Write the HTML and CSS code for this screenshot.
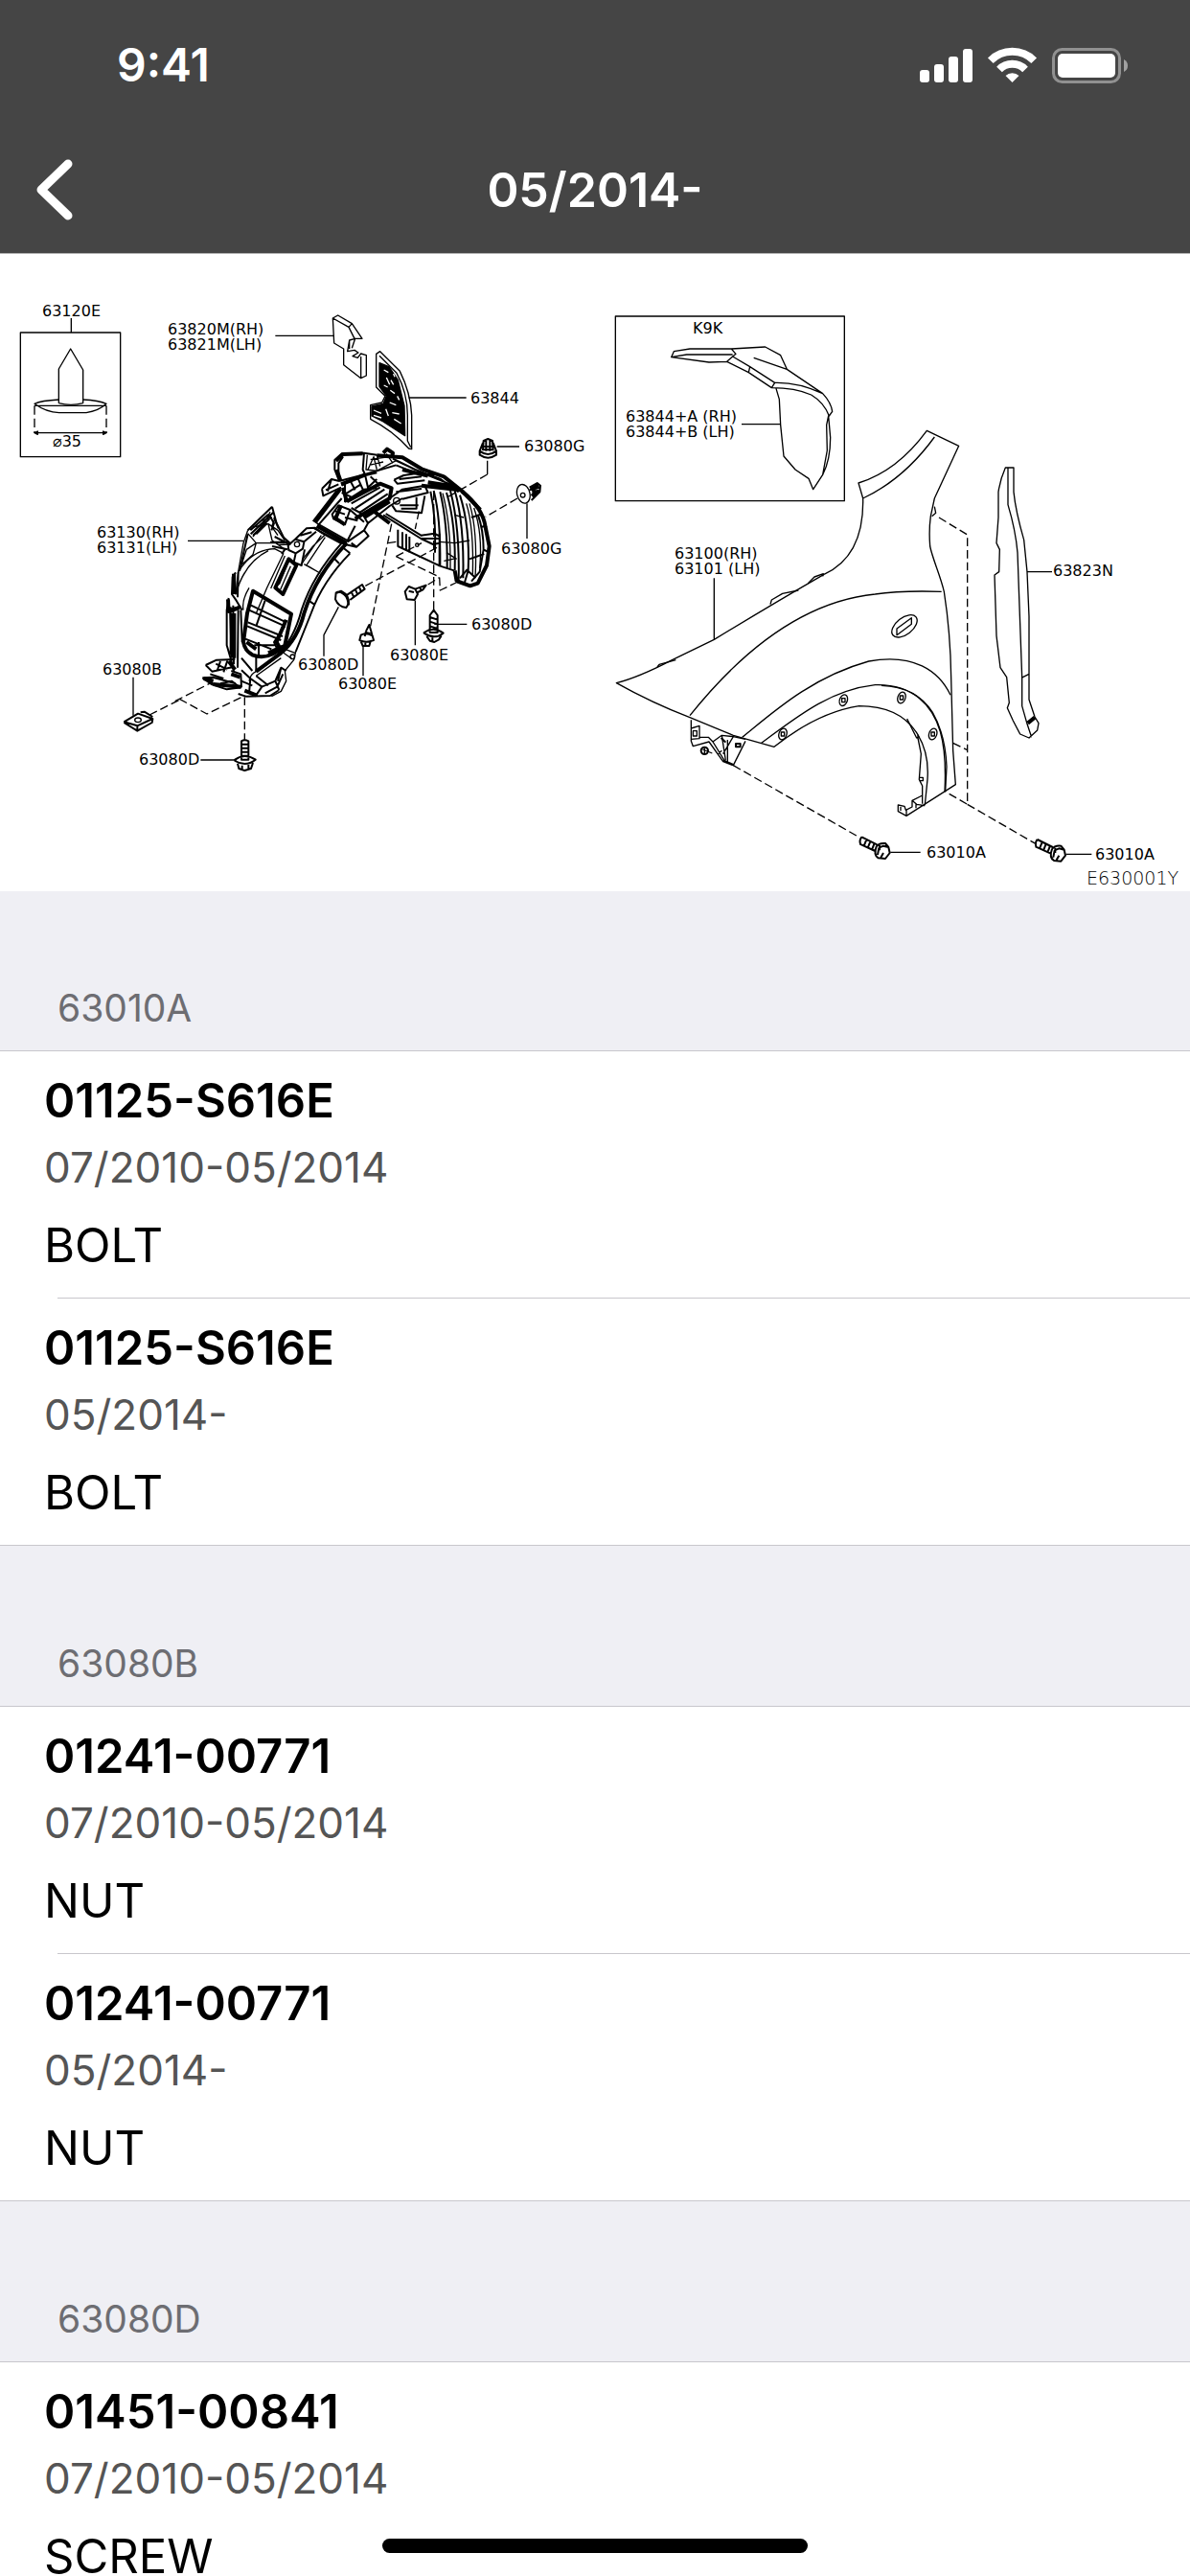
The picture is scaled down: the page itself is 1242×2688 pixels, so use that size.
FILE: index.html
```html
<!DOCTYPE html>
<html lang="en">
<head>
<meta charset="utf-8">
<meta name="viewport" content="width=device-width, initial-scale=1">
<title>05/2014-</title>
<link rel="stylesheet" href="styles.css">
</head>
<body>
<div class="screen">
  <header class="top">
    <div class="status">
      <span class="clock">9:41</span>
      <svg class="indicators" viewBox="960 48 218 39" aria-hidden="true">
        <g fill="#fff">
          <rect x="960" y="72" width="10" height="13" rx="3"/>
          <rect x="975" y="66" width="10" height="19" rx="3"/>
          <rect x="990" y="58" width="10" height="27" rx="3"/>
          <rect x="1005" y="50" width="10" height="35" rx="3"/>
          <path d="M1056.500 85 L1049.500 78 A10 10 0 0 1 1063.500 78 Z"/>
          <rect x="1104" y="55" width="60" height="25" rx="5"/>
        </g>
        <g fill="none" stroke="#fff" stroke-width="8">
          <path d="M1033.800 62.300 A32 32 0 0 1 1079.200 62.300"/>
          <path d="M1043 71.500 A19 19 0 0 1 1070 71.500"/>
        </g>
        <rect x="1099.500" y="50.500" width="69" height="34" rx="9" fill="none" stroke="#919191" stroke-width="3"/>
        <path d="M1173 61 Q1177 63 1177 67.500 Q1177 72 1173 74 Z" fill="#a2a2a2"/>
      </svg>
    </div>
    <nav class="bar">
      <button class="back" type="button" aria-label="Back">
        <svg viewBox="0 0 44 68" aria-hidden="true"><path d="M37 7 L9 34 L37 61" fill="none" stroke="#fff" stroke-width="9" stroke-linecap="round" stroke-linejoin="round"/></svg>
      </button>
      <h1 class="title">05/2014-</h1>
    </nav>
  </header>

  <main class="content">
    <svg class="diagram" viewBox="0 265 1242 665" role="img" aria-label="Front fender and fender liner parts diagram">
      <!-- clip and seals on the left -->
      <g class="ink" transform="translate(0 270) scale(.33333)">
        <path d="M64 231 H377 V620 H64 Z M223 186 V231"/>
        <path d="M184 452 V345 L221 282 L260 348 V452 M184 452 Q222 462 260 452"/>
        <path d="M184 441 Q130 444 108 454 Q145 481 185 482 H270 Q310 476 333 454 Q310 443 260 441 M108 460 H333"/>
        <path d="M108 460 V546 M333 460 V546" stroke-dasharray="28 12"/>
        <path d="M108 545 H333 M108 545 l10 -5 v10 Z M333 545 l-10 -5 v10 Z"/>
        <path d="M862 241 H1045"/>
      </g>
      <g class="ink" transform="translate(160 300) scale(.33333)">
        <path d="M562 96 L566 174 L596 192 V242 L650 284 L667 276 V212 L650 207 L640 220 L624 215 L642 204 L630 196 L608 200 L614 165 L632 160 L654 160 L622 113 L578 87 Z M562 96 L612 124 L630 160 M612 124 L622 113 M650 284 V216 M614 165 V192 M632 160 L622 190"/>
        <path d="M698 312 V208 L710 200 L772 262 Q806 330 809 400 V506 L800 504 Q750 448 680 412 V368 L716 360 L726 340 Z M708 214 L762 268 Q796 330 796 400 V480 L806 500"/>
        <path class="fill" d="M708 236 L738 248 L766 290 L786 370 L788 464 L720 420 L684 402 V372 L720 364 L730 340 L708 310 Z"/>
        <path class="light" d="M722 258 l14 8 M730 282 l10 22 M744 290 l8 14 M722 306 l12 6 M742 322 l14 10 M740 360 l20 8 M728 380 l8 22 M690 384 l24 10 M690 400 l24 8 M748 392 l22 4 M754 412 l22 14 M764 340 l6 12 M752 270 l4 10"/>
        <path d="M800 345 H980"/>
      </g>

      <!-- fender liner -->
      <g class="ink" transform="translate(180 440) scale(.33333)">
        <path d="M48 373 H222"/>
        <path class="bold" d="M312 266 L236 340 M318 282 L245 352 M312 266 L326 318 L348 362 L368 380"/>
        <path d="M236 340 L222 380 L206 470 M306 282 L290 312 L252 360 M252 330 L300 320 L330 340 L352 372 M236 350 L262 380 L232 400 M262 380 H352 M300 320 L312 372 L352 400 M232 400 L216 448 L252 416 L262 380 M312 330 L330 356 M280 310 L312 300 M322 300 L310 330 M330 386 L370 384"/>
        <path class="bold" d="M244 340 L300 290 M252 356 L304 304 M262 352 L296 318 M302 290 L318 318 L310 340 M318 300 L332 334 M236 352 L226 396 L210 468"/>
        <path class="bold" d="M306 378 L362 376 M312 390 L360 400 M320 360 L366 384 M352 400 L342 414"/>
        <path d="M206 470 Q250 400 320 398 L348 412 M206 470 L198 540 Q226 440 300 404 M222 590 Q216 560 240 520 M348 412 L296 520 L262 600 M352 420 L308 522"/>
        <path class="bold" d="M198 472 L188 486 L186 540 L200 560 L218 590 M206 470 L204 550"/>
        <path class="bold" d="M176 552 L170 590 V700 L184 748 L192 780 M182 580 V730 M190 575 L192 760 M206 590 L204 770 M172 590 L214 578 M196 600 V740 M214 590 L218 690"/>
        <path class="heavy" d="M192 476 L194 540 M174 556 L176 594 L210 582 M184 600 L188 740"/>
        <path class="heavy" d="M252 530 L372 602 L352 700 Q300 750 250 730 Q226 716 222 690 L234 600 Z"/>
        <path class="bold" d="M240 590 L352 640 M234 640 L340 684 M228 680 L310 712 M246 575 L356 628 M236 628 L345 672 M352 640 L318 690 L330 716 M262 640 L290 560 M256 700 H320 M270 690 V740"/>
        <path class="heavy" d="M356 620 L326 690 L338 712 M300 724 L346 704 M232 690 L262 712"/>
        <path class="heavy" d="M364 430 L322 520 L346 540 L388 450 Z"/>
        <path d="M370 452 L338 526 M380 460 L350 530 M358 450 L334 510"/>
        <path class="bold" d="M362 388 L384 368 L412 376 L408 398 L386 412 L364 402 Z M384 368 L420 334 L446 332 L470 350 M412 376 L450 344 M400 356 L436 346 M386 412 L380 440 L404 450 L414 400"/>
        <circle cx="390" cy="384" r="8"/>
        <path d="M404 446 L466 356 M418 452 L478 362 M412 446 L462 474 L424 452 M408 430 L440 390 L480 352"/>
        <path class="heavy" d="M546 380 Q450 480 412 600 Q392 680 340 724 L262 782"/>
        <path class="bold" d="M556 412 Q470 500 434 600 L386 720 M530 380 Q440 480 404 590 Q380 680 330 730 M536 396 L556 412 M506 428 L522 444 M426 560 L444 572"/>
        <path d="M386 720 L380 746 L352 780 L356 812 L340 844 L310 860 M352 712 L384 724 M348 724 L376 744 M262 782 Q244 790 240 812 M340 740 L262 796"/>
        <circle cx="376" cy="736" r="7"/>
        <path class="bold" d="M104 762 L138 746 L196 744 M104 762 L124 782 L190 768 M94 802 L122 822 L170 838 L216 832 M94 802 L126 800 L198 820 M118 790 L160 804 M136 758 L172 776 M150 750 L140 780 M172 748 L160 784 M184 780 L214 790 L216 832 M150 820 L186 812 L206 828 M106 810 L140 826"/>
        <path class="heavy" d="M176 750 L196 776 M128 822 L214 830 M226 842 L262 856 M98 804 L128 812 M184 790 L212 800"/>
        <path class="bold" d="M216 778 L244 804 L240 850 M206 852 L230 860 L306 858 L334 840 M244 804 L280 830 L322 812 L340 770 L356 780 M262 796 L300 826 M322 812 L334 840 M262 730 V784 M216 740 L250 780 M280 830 L262 856 M340 770 L330 812 M346 790 L328 830 L290 850 M216 812 L250 826"/>

        <path class="bold" d="M540 384 L576 392 L614 358 L600 340 M452 318 L548 372 M444 334 L540 384 M548 372 L572 326 M576 392 L560 380 M470 350 L530 382 M548 376 L600 340 L612 318"/>
        <path class="heavy" d="M526 210 L446 316 M452 326 L546 380"/>
        <path class="bold" d="M514 216 L440 312 M530 240 L458 322"/>
        <path class="bold" d="M468 210 L498 180 L522 186 M468 210 L472 232 L528 206 M480 214 L520 196 M498 180 L486 218"/>
        <path class="bold" d="M522 186 L508 150 V120 L530 100 L600 98 L640 104 M520 178 V130 L534 110 M600 98 L596 150 L604 168 M522 186 L600 166 L700 136"/>
        <path class="heavy" d="M512 122 L534 102 L596 100 M514 150 L526 184 M528 196 L604 166"/>
        <path d="M610 104 L606 150 L640 154 L700 122 M620 118 L680 110 M616 136 L660 126 M640 104 L650 140 M670 100 L690 130 M612 150 L630 110 L640 150"/>
        <path class="heavy" d="M660 98 L672 86 L690 98 L688 112 M640 106 L720 112 L780 148 L850 172 L910 220 L964 276"/>
        <path class="bold" d="M690 116 L760 150 L840 180 L896 220 M700 136 L760 160 L820 166 M700 122 L790 164 L870 196 M694 182 L724 168 L780 160 L830 176 M694 182 L704 194 L790 184 M710 180 L780 172"/>
        <path class="bold" d="M530 200 L570 176 L640 160 M540 190 V250 L600 212 L640 208 M556 184 L572 214 M580 176 L596 212 M604 170 L612 206 L640 180 M536 230 L590 196 M620 172 L650 200 M530 222 L560 236"/>
        <path class="heavy" d="M546 250 L650 194 L686 208 L680 240 L572 304"/>
        <path class="heavy" d="M504 298 L540 322 M528 262 L512 300 M600 300 L680 250 M534 206 L546 252"/>
        <path class="bold" d="M560 256 L650 206 M572 272 L664 212 M584 286 L674 226 M500 290 L520 262 L556 276 L540 322 L504 304 Z M510 280 L540 290 M556 276 L600 314 M596 290 L612 318 L680 264 L720 240 M540 300 L580 310 M560 270 L600 292 M630 276 L650 296"/>
        <circle cx="702" cy="248" r="10"/>
        <path class="bold" d="M680 240 L720 212 L790 200 L800 222 L720 242 M700 220 L780 210 M688 262 L700 280 L780 286 L790 232 M712 262 H770 M716 272 H764 V236"/>
        <path class="heavy" d="M630 280 L680 318 M780 200 L900 214 M800 190 L890 204 M720 150 L800 170"/>
        <path class="bold" d="M660 292 L778 366 L836 366 M668 288 L782 358 M778 366 L816 384 L836 380 M706 338 V390 L838 452 L882 466 M720 346 V398 M732 352 V404 M742 360 V410 M836 350 V454 M778 356 L820 350 L838 360"/>
        <circle cx="766" cy="386" r="5"/>
        <path class="bold" d="M808 218 Q826 300 822 410 M818 216 Q840 300 838 450 M838 220 Q862 320 860 458 M858 222 Q888 320 884 466 M870 216 Q900 330 896 500 M884 216 Q914 320 910 490 M900 230 Q932 330 926 466"/>
        <path d="M846 224 Q872 320 870 460 M920 256 Q944 330 940 480 M930 256 Q956 340 948 490 M944 270 Q972 350 962 460 M836 376 L884 380 L930 372 M850 436 L888 428 M884 292 L912 300 M858 410 L890 430"/>
        <path class="heavy" d="M906 218 Q972 270 980 330 L992 390 L984 450 L956 506 L932 514 L888 498 M884 466 L890 500"/>
        <path class="bold" d="M956 290 Q974 340 974 400 L962 470 L936 500 M900 490 L922 464 L946 486 M926 466 L914 506 M974 400 L992 410 M930 430 L976 414 M966 330 L980 326 M936 300 L966 290"/>

        <g stroke-dasharray="26 12">
          <path d="M986 165 L862 236 M1080 240 L980 298 M818 220 V590 M686 320 L620 640 M604 514 L836 390 M772 280 L760 336 M700 422 L836 486 L838 528 L888 504 M700 422 L780 380 M800 510 L836 488 M676 380 L700 376"/>
          <path d="M8 875 L124 816 M22 868 L108 915 L222 860 M226 862 V998"/>
        </g>
        <path d="M1016 78 H1086 M986 122 V165 M1110 256 V366 M520 580 L474 668 V734 M597 700 V796 M760 560 V700 M820 634 H922 M88 1059 H200"/>

        <path class="bold" d="M974 60 L988 54 L1002 60 L1004 88 H972 Z M972 66 L962 92 Q988 112 1014 92 L1004 66 M962 92 V104 Q988 122 1014 104 V92 M982 58 V92 M994 58 V92 M974 78 H1004"/>
        <path class="heavy" d="M1122 212 L1146 198 M1126 234 L1146 216 M1132 204 V232"/>
        <path class="bold" d="M1118 206 L1142 192 L1152 200 L1150 220 L1124 246 M1118 214 L1150 206 M1124 230 L1150 214"/>
        <ellipse cx="1099" cy="226" rx="20" ry="30" transform="rotate(-14 1099 226)"/><circle cx="1097" cy="230" r="7"/>
        <path class="bold" d="M512 536 Q526 526 544 548 Q556 570 544 582 Q520 580 510 556 Z M516 536 L528 530 Q556 544 552 574 M544 544 L594 510 L602 524 L556 558 M560 532 l8 18 M572 524 l8 18 M584 516 l8 18"/>
        <path class="bold" d="M606 656 L616 636 L622 656 M606 656 L602 672 M622 656 L626 672 M590 668 Q606 658 626 670 L630 684 Q606 694 586 684 Z M590 688 L596 702 H616 L620 688 M604 686 V702 M606 660 L620 664"/>
        <path class="bold" d="M728 532 L740 516 L760 524 L768 540 L758 558 L734 556 Z M760 524 L794 512 L784 526 L768 534 M740 530 L756 534 M774 518 L780 530"/>
        <path class="bold" d="M806 606 L818 590 L830 606 V660 H806 Z M806 612 L830 620 M806 626 L830 634 M806 640 L830 648 M788 660 Q818 640 848 662 Q820 684 788 662 Z M796 672 L806 686 L820 690 L834 682 L842 670 M814 674 V690"/>
        <path class="bold" d="M216 1000 Q226 994 238 1000 V1058 H216 Z M216 1010 H238 M216 1022 H238 M216 1034 H238 M216 1046 H238 M196 1058 Q226 1036 260 1058 Q230 1082 196 1062 Z M204 1070 L208 1086 L226 1092 L246 1086 L252 1068 M218 1076 V1090 M238 1074 V1088"/>
      </g>
      <g class="ink" transform="translate(90 520) scale(.33333)">
        <path d="M147 560 V680"/>
        <path class="bold" d="M118 700 L162 674 L208 690 L206 702 L160 728 L118 702 M170 670 L182 668 L208 684 M118 700 L160 712 L208 690 M160 712 V728"/>
        <ellipse cx="162" cy="694" rx="10" ry="7"/>
        <path d="M198 678 L294 630" stroke-dasharray="26 12"/>
      </g>

      <!-- K9K inset -->
      <g class="ink" transform="translate(620 300) scale(.33333)">
        <path d="M67 90 H784 V668 H67 Z M462 428 H584"/>
        <path d="M242 218 L250 200 L300 192 H430 L444 208 L434 216 L416 232 L360 234 L242 218 L290 210 H434 M430 192 L536 186 L584 212 L604 256 L500 220 M604 256 L716 332 M434 216 L488 248 L566 298 L556 314 L484 266 L416 232 M488 248 L484 266 M566 298 Q640 296 716 332 Q742 360 746 388 L736 402 Q720 360 680 336 Q630 314 556 314 M570 316 L580 350 L584 430 L594 528 L630 570 L672 598 L686 632 L716 586 Q740 540 740 470 L734 402 L728 430 L730 510 L716 586"/>
      </g>

      <!-- fender -->
      <g class="ink" transform="translate(860 430) scale(.33333)">
        <path d="M122 270 L108 222 Q230 184 322 58 L422 106 L346 270 L334 326 Q328 370 332 420 C340 460 364 510 376 562 Q396 690 398 830 L404 1060 L412 1166 L258 1264 L232 1250 V1230 L252 1234 L256 1246 L276 1236 V1216 L308 1200 M122 270 Q250 210 346 78 M122 270 Q126 450 0 508 M346 296 L350 316 L338 326 M276 1216 L290 1228 L316 1232 M240 1236 V1248 M258 1264 V1246 M288 1228 V1240"/>
        <path d="M360 330 L449 384 V1228 L380 1188 M404 1036 L449 1058 M449 1228 L664 1352" stroke-dasharray="26 12"/>
        <ellipse cx="252" cy="670" rx="46" ry="26" transform="rotate(-38 252 670)"/>
        <path d="M228 678 L274 644 V664 L228 698 Z"/>
        <path d="M568 174 H594 V250 Q600 310 626 400 L636 500 L642 640 V900 L660 954 L672 974 L668 996 L642 1020 L614 1008 L592 966 L574 926 L580 910 L572 830 L552 800 L540 700 L534 510 L548 500 L550 430 L540 410 L546 330 V250 Q552 210 568 174 Z M576 176 V290 Q600 370 606 440 L620 830 V920 L636 976 L650 1018 M618 832 L642 820 M636 500 H714"/>
        <path class="heavy" d="M638 974 L660 956"/>
        <path d="M208 1378 H302 M758 1384 H838"/>
        <path id="bolt" class="bold" d="M118 1330 L166 1354 M112 1352 L160 1374 M118 1330 Q110 1340 114 1352 M134 1336 l-8 20 M146 1342 l-8 20 M158 1350 l-8 20 M164 1360 Q172 1348 192 1350 L202 1362 L206 1380 L192 1398 L170 1396 Q154 1386 164 1360 M172 1364 L186 1358 L202 1362 M172 1364 L168 1386 M186 1380 L178 1394 M174 1356 V1372"/>
        <use href="#bolt" x="550" y="8"/>
      </g>
      <g class="ink" transform="translate(620 540) scale(.33333)">
        <path d="M720 178 Q560 270 376 382 L240 448 Q140 500 70 518 Q180 580 300 626 L436 682 L564 718 Q700 610 830 590 Q960 590 1014 680 Q1050 740 1044 820 L1036 900 M376 190 V382"/>
        <path d="M300 620 Q580 270 880 240 Q960 228 1088 232 M464 688 C560 610 680 500 860 450 C1000 424 1080 480 1116 556 M524 706 C640 620 740 540 880 524 C1000 520 1060 590 1084 670 Q1104 740 1098 858"/>
        <path d="M900 526 Q1010 530 1060 610 Q1100 680 1104 780 L1100 858"/>
        <path d="M552 272 L556 258 L590 238 L640 228 M670 206 L690 186 L718 176 L716 184 M198 468 L204 460 L256 446"/>
        <path d="M1014 690 L1024 740 L1018 820 L1028 840 V896 M980 630 L1010 690 L1018 686 M1018 814 h12 v10 h-12 M1014 680 v14"/>
        <path d="M304 634 V700 L310 716 L360 702 L404 764 L436 776 L474 700 M304 660 L330 652 V692 L304 694 M310 668 h12 v16 h-12 Z M330 688 H358 L372 702 L400 682 L436 686 L474 694 M372 702 L410 764 M400 682 L412 760 M418 696 V770 M436 686 L404 740 M386 742 L400 730"/>
        <path class="bold" d="M404 760 L436 774 M398 690 l14 14 M444 708 h14 v10 h-14 Z"/>
        <circle class="bold" cx="346" cy="730" r="11"/><path d="M340 726 L370 738 M346 722 V738"/>
        <g id="hole"><ellipse cx="591" cy="678" rx="12" ry="18" transform="rotate(20 591 678)"/><path d="M586 672 h10 v12 h-10 Z"/></g>
        <use href="#hole" x="190" y="-106"/>
        <use href="#hole" x="372" y="-114"/>
        <use href="#hole" x="470" y="0"/>
        <path d="M436 776 L832 1002" stroke-dasharray="26 12"/>
      </g>

      <g class="labels">
        <text x="44" y="330">63120E</text>
        <text x="55" y="466">⌀35</text>
        <text x="175" y="349">63820M(RH)</text>
        <text x="175" y="365">63821M(LH)</text>
        <text x="491" y="421">63844</text>
        <text x="547" y="471">63080G</text>
        <text x="523" y="578">63080G</text>
        <text x="101" y="561">63130(RH)</text>
        <text x="101" y="577">63131(LH)</text>
        <text x="492" y="657">63080D</text>
        <text x="407" y="689">63080E</text>
        <text x="311" y="699">63080D</text>
        <text x="353" y="719">63080E</text>
        <text x="107" y="704">63080B</text>
        <text x="145" y="798">63080D</text>
        <text x="723" y="348">K9K</text>
        <text x="653" y="440">63844+A (RH)</text>
        <text x="653" y="456">63844+B (LH)</text>
        <text x="704" y="583">63100(RH)</text>
        <text x="704" y="599">63101 (LH)</text>
        <text x="1099" y="601">63823N</text>
        <text x="967" y="895">63010A</text>
        <text x="1143" y="897">63010A</text>
        <text class="code" x="1134" y="923">E630001Y</text>
      </g>
    </svg>

    <section class="group">
      <h2 class="ref">63010A</h2>
      <ul class="parts">
        <li class="part"><strong class="number">01125-S616E</strong><span class="dates">07/2010-05/2014</span><span class="name">BOLT</span></li>
        <li class="part"><strong class="number">01125-S616E</strong><span class="dates">05/2014-</span><span class="name">BOLT</span></li>
      </ul>
    </section>
    <section class="group">
      <h2 class="ref">63080B</h2>
      <ul class="parts">
        <li class="part"><strong class="number">01241-00771</strong><span class="dates">07/2010-05/2014</span><span class="name">NUT</span></li>
        <li class="part"><strong class="number">01241-00771</strong><span class="dates">05/2014-</span><span class="name">NUT</span></li>
      </ul>
    </section>
    <section class="group">
      <h2 class="ref">63080D</h2>
      <ul class="parts">
        <li class="part"><strong class="number">01451-00841</strong><span class="dates">07/2010-05/2014</span><span class="name">SCREW</span></li>
      </ul>
    </section>
  </main>
  <div class="home"></div>
</div>
</body>
</html>
```
FILE: styles.css
```css
* { box-sizing: border-box; margin: 0; padding: 0; }

body {
  font-family: Inter, "Liberation Sans", sans-serif;
  background: #efeff4;
  color: #000;
}

.screen {
  position: relative;
  display: flex;
  flex-direction: column;
  height: 100vh;
  overflow: hidden;
}

.top {
  flex: none;
  background: #454545;
  color: #fff;
  border-bottom: 1px solid #b2b2b2;
}

.status {
  display: flex;
  justify-content: space-between;
  align-items: center;
  height: 132px;
  padding: 4px 64px 0 122px;
}

.clock { font-size: 48px; font-weight: 600; line-height: 58px; }
.indicators { width: 218px; height: 39px; }

.bar {
  display: grid;
  grid-template-columns: 120px 1fr 120px;
  align-items: center;
  height: 132px;
}

.back {
  height: 132px;
  padding-left: 34px;
  display: flex;
  align-items: center;
  background: none;
  border: 0;
}
.back svg { width: 44px; height: 68px; }

.title {
  font-size: 50px;
  font-weight: 600;
  line-height: 60px;
  text-align: center;
}

.content { flex: 1; min-height: 0; overflow: hidden; }

.diagram { display: block; width: 100%; background: #fff; }
.ink { fill: none; stroke: #000; stroke-width: 4; stroke-linejoin: round; }
.ink .bold { stroke-width: 6; }
.ink .heavy { stroke-width: 12; }
.ink .fill { fill: #000; }
.ink .light { stroke: #fff; }
.labels {
  font-family: "DejaVu Sans", sans-serif;
  font-size: 16px;
}
.labels .code { font-size: 19px; font-weight: 200; }

.ref {
  padding: 98px 60px 20px;
  font-size: 39px;
  font-weight: 400;
  line-height: 48px;
  color: #6d6d72;
}
.group + .group .ref { padding-top: 99px; }

.parts {
  list-style: none;
  background: #fff;
  border-top: 1px solid #c8c7cc;
  border-bottom: 1px solid #c8c7cc;
}

.part {
  position: relative;
  display: flex;
  flex-direction: column;
  padding: 23px 46px 24px;
}
.part + .part { padding-top: 24px; }
.part + .part::before {
  content: "";
  position: absolute;
  top: 0;
  left: 60px;
  right: 0;
  height: 1px;
  background: #c8c7cc;
}

.number { font-size: 49px; font-weight: 600; line-height: 58px; }
.dates { margin-top: 12px; font-size: 44px; line-height: 56px; color: #555; }
.name { margin-top: 24px; font-size: 49px; line-height: 60px; }

.home {
  position: absolute;
  left: 50%;
  bottom: 24px;
  width: 444px;
  height: 15px;
  margin-left: -222px;
  border-radius: 8px;
  background: #000;
}
```
